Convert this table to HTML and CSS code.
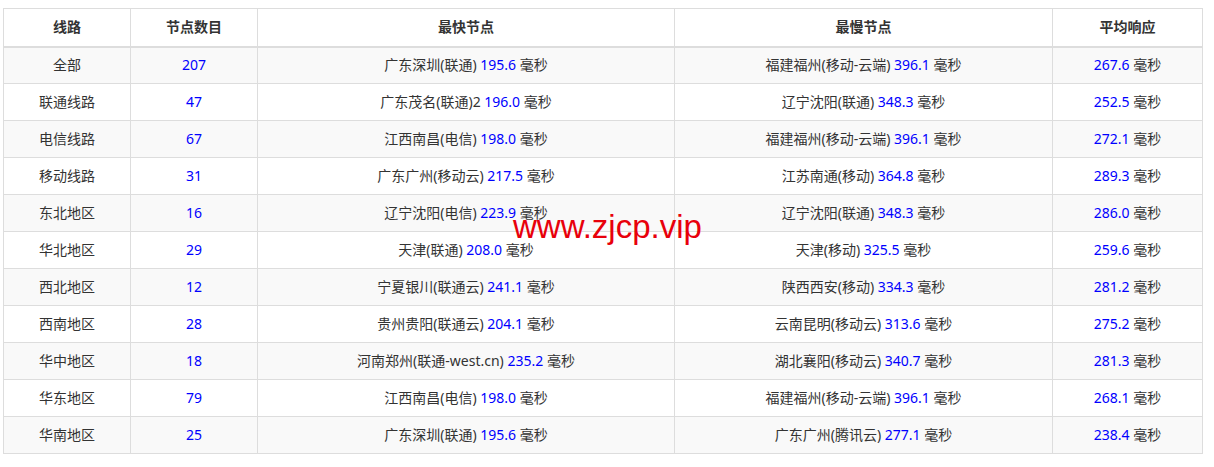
FILE: index.html
```html
<!DOCTYPE html>
<html lang="zh-CN">
<head>
<meta charset="utf-8">
<title>线路节点</title>
<link rel="stylesheet" href="styles.css">
</head>
<body>
<div class="wrap">
<table class="tbl">
<colgroup>
<col class="c1"><col class="c2"><col class="c3"><col class="c4"><col class="c5">
</colgroup>
<thead>
<tr><th>线路</th><th>节点数目</th><th>最快节点</th><th>最慢节点</th><th>平均响应</th></tr>
</thead>
<tbody>
<tr><td>全部</td><td><span class="n">207</span></td><td>广东深圳(联通) <span class="n">195.6</span> 毫秒</td><td>福建福州(移动-云端) <span class="n">396.1</span> 毫秒</td><td><span class="n">267.6</span> 毫秒</td></tr>
<tr><td>联通线路</td><td><span class="n">47</span></td><td>广东茂名(联通)2 <span class="n">196.0</span> 毫秒</td><td>辽宁沈阳(联通) <span class="n">348.3</span> 毫秒</td><td><span class="n">252.5</span> 毫秒</td></tr>
<tr><td>电信线路</td><td><span class="n">67</span></td><td>江西南昌(电信) <span class="n">198.0</span> 毫秒</td><td>福建福州(移动-云端) <span class="n">396.1</span> 毫秒</td><td><span class="n">272.1</span> 毫秒</td></tr>
<tr><td>移动线路</td><td><span class="n">31</span></td><td>广东广州(移动云) <span class="n">217.5</span> 毫秒</td><td>江苏南通(移动) <span class="n">364.8</span> 毫秒</td><td><span class="n">289.3</span> 毫秒</td></tr>
<tr><td>东北地区</td><td><span class="n">16</span></td><td>辽宁沈阳(电信) <span class="n">223.9</span> 毫秒</td><td>辽宁沈阳(联通) <span class="n">348.3</span> 毫秒</td><td><span class="n">286.0</span> 毫秒</td></tr>
<tr><td>华北地区</td><td><span class="n">29</span></td><td>天津(联通) <span class="n">208.0</span> 毫秒</td><td>天津(移动) <span class="n">325.5</span> 毫秒</td><td><span class="n">259.6</span> 毫秒</td></tr>
<tr><td>西北地区</td><td><span class="n">12</span></td><td>宁夏银川(联通云) <span class="n">241.1</span> 毫秒</td><td>陕西西安(移动) <span class="n">334.3</span> 毫秒</td><td><span class="n">281.2</span> 毫秒</td></tr>
<tr><td>西南地区</td><td><span class="n">28</span></td><td>贵州贵阳(联通云) <span class="n">204.1</span> 毫秒</td><td>云南昆明(移动云) <span class="n">313.6</span> 毫秒</td><td><span class="n">275.2</span> 毫秒</td></tr>
<tr><td>华中地区</td><td><span class="n">18</span></td><td>河南郑州(联通-west.cn) <span class="n">235.2</span> 毫秒</td><td>湖北襄阳(移动云) <span class="n">340.7</span> 毫秒</td><td><span class="n">281.3</span> 毫秒</td></tr>
<tr><td>华东地区</td><td><span class="n">79</span></td><td>江西南昌(电信) <span class="n">198.0</span> 毫秒</td><td>福建福州(移动-云端) <span class="n">396.1</span> 毫秒</td><td><span class="n">268.1</span> 毫秒</td></tr>
<tr><td>华南地区</td><td><span class="n">25</span></td><td>广东深圳(联通) <span class="n">195.6</span> 毫秒</td><td>广东广州(腾讯云) <span class="n">277.1</span> 毫秒</td><td><span class="n">238.4</span> 毫秒</td></tr>
</tbody>
</table>
<div class="mark">www.zjcp.vip</div>
</div>
</body>
</html>
```
FILE: styles.css
```css
html, body {
  margin: 0;
  padding: 0;
  background: #fff;
}
body {
  padding: 8px 0 0 3px;
  font-family: "Noto Sans", "Noto Sans CJK SC", sans-serif;
  font-size: 14px;
  color: #333;
}
.wrap {
  position: relative;
  width: 1200px;
}
.tbl {
  width: 1200px;
  border-collapse: collapse;
  table-layout: fixed;
}
.c1 { width: 127px; }
.c2 { width: 127px; }
.c3 { width: 417px; }
.c4 { width: 378px; }
.c5 { width: 150px; }
.tbl th, .tbl td {
  border: 1px solid #ddd;
  padding: 0 8px;
  text-align: center;
  vertical-align: middle;
  line-height: 20px;
  white-space: nowrap;
  box-sizing: border-box;
}
.tbl th {
  font-weight: bold;
  color: #333;
  border-bottom: 2px solid #ddd;
  height: 38px;
}
.tbl td { height: 37px; }
.tbl tbody tr:nth-child(odd) { background: #f9f9f9; }
.n { color: #0000ff; }
.mark {
  position: absolute;
  left: 510px;
  top: 199px;
  font-family: "Liberation Sans", Arial, sans-serif;
  font-size: 33px;
  line-height: 40px;
  color: #e8000b;
}
```
